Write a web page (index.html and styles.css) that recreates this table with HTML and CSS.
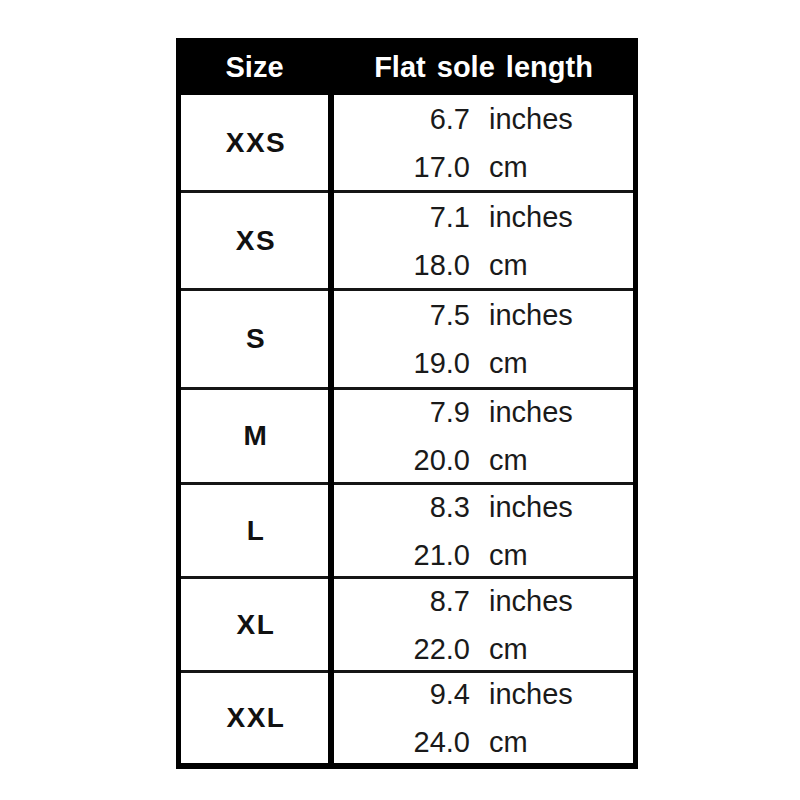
FILE: index.html
```html
<!DOCTYPE html>
<html>
<head>
<meta charset="utf-8">
<title>Size chart</title>
<link rel="stylesheet" href="styles.css">
</head>
<body>
<div class="page">
  <div class="chart">
    <div class="hcell">Size</div>
    <div class="hcell">Flat sole length</div>

    <div class="size">XXS</div>
    <div class="vals"><span class="num">6.7</span><span class="unit">inches</span><span class="num">17.0</span><span class="unit">cm</span></div>

    <div class="size sep">XS</div>
    <div class="vals sep"><span class="num">7.1</span><span class="unit">inches</span><span class="num">18.0</span><span class="unit">cm</span></div>

    <div class="size sep">S</div>
    <div class="vals sep"><span class="num">7.5</span><span class="unit">inches</span><span class="num">19.0</span><span class="unit">cm</span></div>

    <div class="size sep">M</div>
    <div class="vals sep"><span class="num">7.9</span><span class="unit">inches</span><span class="num">20.0</span><span class="unit">cm</span></div>

    <div class="size sep">L</div>
    <div class="vals sep"><span class="num">8.3</span><span class="unit">inches</span><span class="num">21.0</span><span class="unit">cm</span></div>

    <div class="size sep">XL</div>
    <div class="vals sep"><span class="num">8.7</span><span class="unit">inches</span><span class="num">22.0</span><span class="unit">cm</span></div>

    <div class="size sep">XXL</div>
    <div class="vals sep"><span class="num">9.4</span><span class="unit">inches</span><span class="num">24.0</span><span class="unit">cm</span></div>
  </div>
</div>
</body>
</html>
```

FILE: styles.css
```css
html, body {
  margin: 0;
  padding: 0;
  background: #ffffff;
}

.page {
  padding: 38px 0 0 176px;
}

.chart {
  display: inline-grid;
  grid-template-columns: 147px 299px;
  grid-template-rows: 57px 95px 98px 99px 95px 94px 94px 93px;
  column-gap: 6px;
  background: #000000;
  border: 5px solid #000000;
  border-top: 0;
  border-bottom-width: 6px;
  font-family: "Liberation Sans", Arial, sans-serif;
}

.hcell {
  display: flex;
  align-items: center;
  justify-content: center;
  color: #ffffff;
  font-weight: bold;
  font-size: 29px;
  word-spacing: 3px;
  padding-top: 1px;
}

.size {
  display: flex;
  align-items: center;
  justify-content: center;
  background: #ffffff;
  color: #111111;
  font-weight: bold;
  font-size: 28px;
  letter-spacing: 1.5px;
  padding-left: 3px;
}

.vals {
  display: grid;
  grid-template-columns: 136px auto;
  column-gap: 19px;
  align-content: center;
  background: #ffffff;
  color: #1a1a1a;
  font-size: 29px;
  line-height: 48px;
}

.sep {
  border-top: 3px solid #151515;
}

.num {
  text-align: right;
}

.unit {
  text-align: left;
}
```
